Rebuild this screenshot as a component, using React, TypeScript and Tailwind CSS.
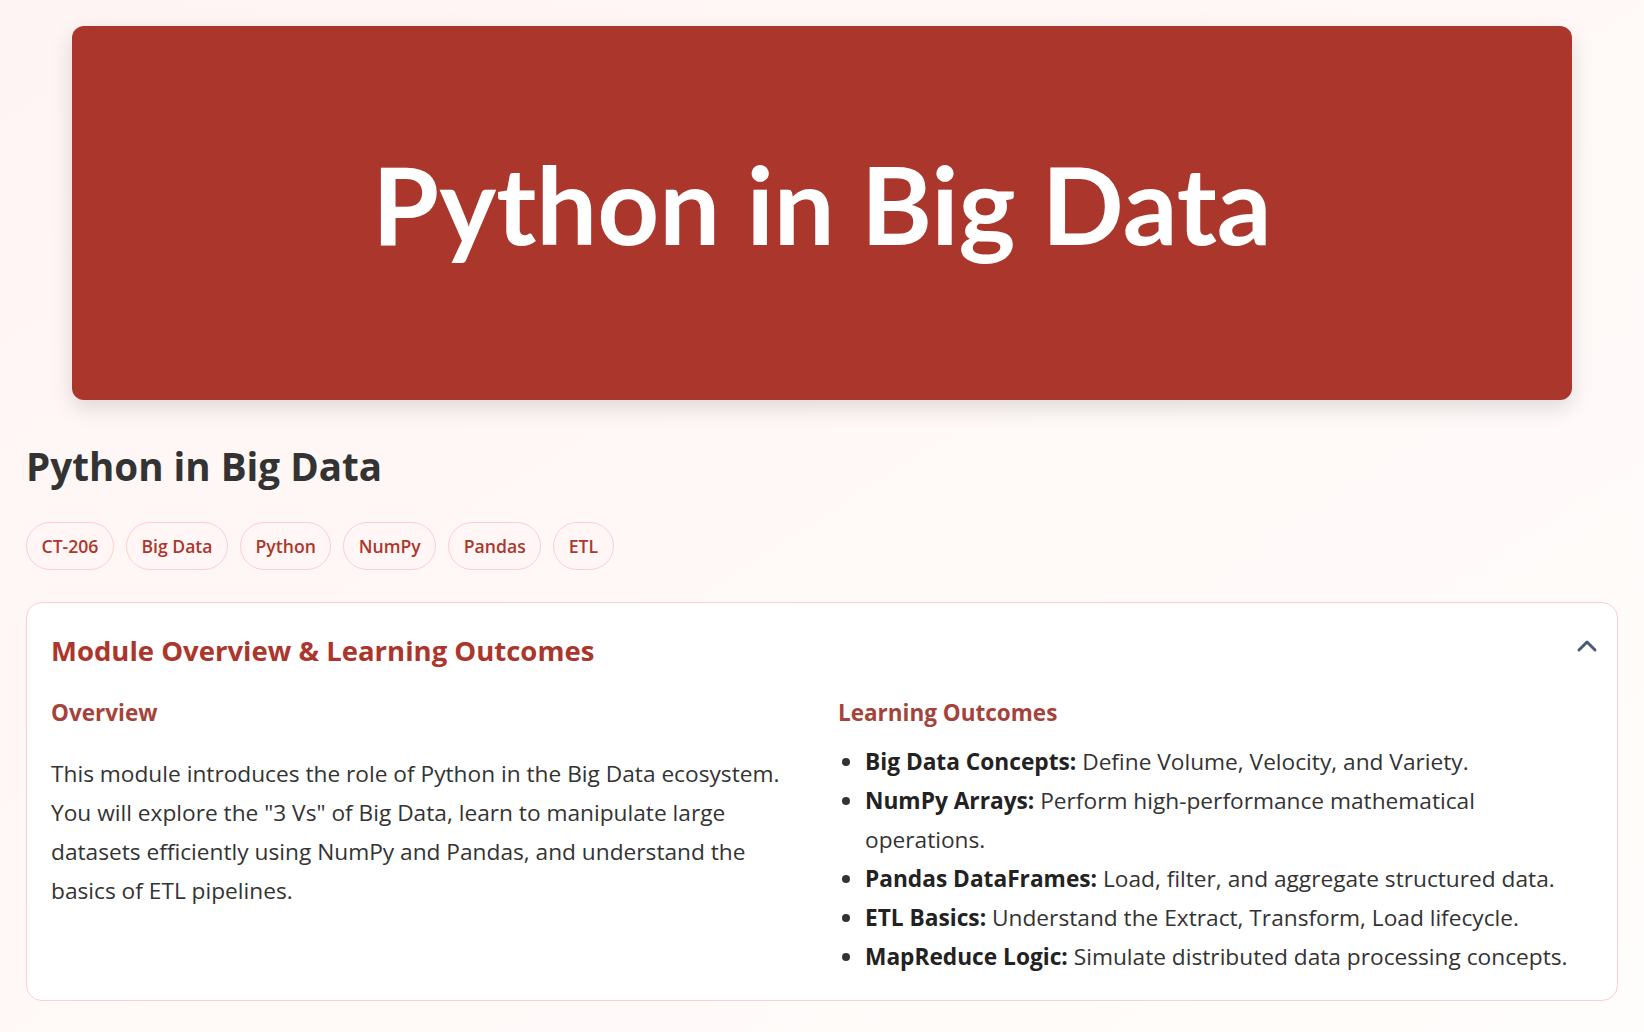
import React from "react";
import { ChevronUp } from "lucide-react";

const tags = ["CT-206", "Big Data", "Python", "NumPy", "Pandas", "ETL"];

const outcomes = [
  { title: "Big Data Concepts:", text: "Define Volume, Velocity, and Variety." },
  { title: "NumPy Arrays:", text: "Perform high-performance mathematical operations." },
  { title: "Pandas DataFrames:", text: "Load, filter, and aggregate structured data." },
  { title: "ETL Basics:", text: "Understand the Extract, Transform, Load lifecycle." },
  { title: "MapReduce Logic:", text: "Simulate distributed data processing concepts." },
];

const App: React.FC = () => {
  return (
    <div className="min-h-screen bg-gradient-to-br from-[#fff4f4] to-[#fffdfb] px-[26px] pt-[26px] pb-8 font-['Open_Sans',sans-serif] text-[#333]">
      <div className="mx-auto flex h-[374px] max-w-[1500px] items-center justify-center rounded-xl bg-[#ab362c] pb-5 shadow-[0_8px_22px_rgba(0,0,0,0.13)]">
        <span className="font-['Lato',sans-serif] text-[108px] font-bold leading-none text-white">Python in Big Data</span>
      </div>

      <h1 className="mt-[42px] text-[38.6px] font-bold leading-[48px] text-[#333]">Python in Big Data</h1>

      <div className="mt-[32px] flex flex-wrap gap-3">
        {tags.map((tag) => (
          <span
            key={tag}
            className="rounded-full border border-[#fcd0cc] bg-[#fff6f5] px-[14.5px] py-3 text-[17.6px] font-semibold leading-[22px] text-[#ac372d]"
          >
            {tag}
          </span>
        ))}
      </div>

      <div className="mt-8 rounded-2xl border border-[#fbd0d0] bg-white p-6">
        <div className="mt-[8px] flex items-center justify-between">
          <h2 className="text-[27.5px] font-bold leading-[32px] text-[#ab362c]">
            Module Overview &amp; Learning Outcomes
          </h2>
          <ChevronUp size={32} strokeWidth={2.2} className="-mr-[10px] -mt-[10px] text-[#4b5878]" />
        </div>

        <div className="mt-[32px] grid grid-cols-2 gap-8">
          <div>
            <h3 className="text-[22.5px] font-bold leading-[27px] text-[#a4433b]">Overview</h3>
            <p className="mt-[29px] text-[22.7px] leading-[38.9px] text-[#333]">
              This module introduces the role of Python in the Big Data ecosystem. You will explore the "3 Vs" of Big
              Data, learn to manipulate large datasets efficiently using NumPy and Pandas, and understand the basics
              of ETL pipelines.
            </p>
          </div>
          <div>
            <h3 className="text-[22.5px] font-bold leading-[27px] text-[#a4433b]">Learning Outcomes</h3>
            <ul className="mt-[17px] list-disc pl-[27px] text-[22.7px] leading-[38.9px] text-[#333]">
              {outcomes.map((o) => (
                <li key={o.title}>
                  <strong className="font-bold text-[#222]">{o.title}</strong> {o.text}
                </li>
              ))}
            </ul>
          </div>
        </div>
      </div>
    </div>
  );
};

export default App;
